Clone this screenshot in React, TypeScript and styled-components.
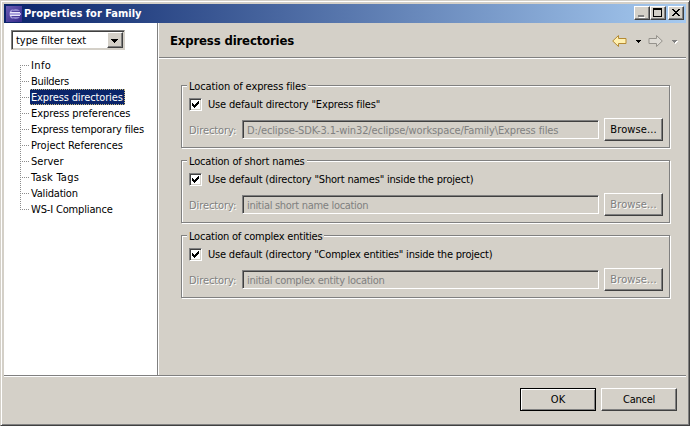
import React from "react";
import styled, { createGlobalStyle } from "styled-components";

const face = "#d4d0c8";
const shadow = "#808080";
const dark = "#404040";

const GlobalStyle = createGlobalStyle`
  * { box-sizing: border-box; }
  body { margin: 0; overflow: hidden; background: ${face}; }
`;

const Dialog = styled.div`
  width: 690px;
  height: 426px;
  display: flex;
  flex-direction: column;
  background: ${face};
  border: 1px solid;
  border-color: ${face} ${dark} ${dark} ${face};
  box-shadow: inset 1px 1px 0 #fff, inset -1px -1px 0 ${shadow};
  padding: 3px;
  font: 11px/16px "DejaVu Sans Condensed", "DejaVu Sans", sans-serif;
  color: #000;
  white-space: nowrap;
`;

const Label = styled.span<{ $tracking?: number }>`
  display: inline-block;
  letter-spacing: ${(p) => p.$tracking ?? 0}px;
`;

const TitleBar = styled.header`
  height: 19px;
  flex: none;
  display: flex;
  align-items: flex-start;
  gap: 3px;
  padding: 2px 2px 0 2px;
  background: linear-gradient(90deg, #0a246a, #a6caf0);
  color: #fff;
`;

const Title = styled.h1`
  margin: 0 0 0 -1px;
  flex: 1;
  font: bold 11px/15px "DejaVu Sans Condensed", sans-serif;
`;

const Captions = styled.div`
  display: flex;
`;

const CaptionButton = styled.button<{ $gap?: boolean }>`
  width: 16px;
  height: 14px;
  padding: 0;
  margin-left: ${(p) => (p.$gap ? 2 : 0)}px;
  display: block;
  background: ${face};
  border: 1px solid;
  border-color: #fff ${dark} ${dark} #fff;
  box-shadow: inset -1px -1px 0 ${shadow};
  svg { display: block; }
`;

const Main = styled.div`
  display: flex;
  height: 352px;
  flex: none;
`;

const Sidebar = styled.nav`
  width: 154px;
  flex: none;
  padding: 7px 0 0 7px;
  background: #fff;
  border-right: 1px solid ${shadow};
`;

const Combo = styled.div`
  width: 114px;
  height: 20px;
  display: flex;
  justify-content: space-between;
  padding: 0 0 0 4px;
  border: 1px solid;
  border-color: ${shadow} ${face} ${face} ${shadow};
  box-shadow: inset 1px 1px 0 ${dark}, inset -1px -1px 0 ${face};
  line-height: 20px;
`;

const DropButton = styled.button`
  width: 16px;
  height: 16px;
  margin: 1px;
  padding: 4px 3px;
  background: ${face};
  border: 1px solid;
  border-color: #fff ${dark} ${dark} #fff;
  box-shadow: inset -1px -1px 0 ${shadow};
  svg { display: block; }
`;

const Tree = styled.ul`
  list-style: none;
  margin: 7px 0 0 9px;
  padding: 0;
`;

const TreeRow = styled.li`
  display: flex;
  height: 16px;
  &:last-child > i { height: 9px; }
  &:first-child > i { height: 8px; margin-top: 8px; }
  &:first-child > i::after { margin-top: 0; }
`;

const Branch = styled.i`
  width: 10px;
  flex: none;
  height: 16px;
  background: repeating-linear-gradient(180deg, #8c8c8c 0 1px, #fff 1px 2px) 0 0 / 1px 100% no-repeat;
  &::after {
    content: "";
    display: block;
    height: 1px;
    margin-top: 8px;
    background: repeating-linear-gradient(90deg, #8c8c8c 0 1px, #fff 1px 2px);
  }
`;

const TreeLabel = styled.span<{ $selected?: boolean }>`
  height: 16px;
  padding: 0 1px;
  line-height: ${(p) => (p.$selected ? 16 : 18)}px;
  color: ${(p) => (p.$selected ? "#fff" : "#000")};
  background: ${(p) => (p.$selected ? "#0a246a" : "none")};
  border: ${(p) => (p.$selected ? "1px dotted #c8b878" : "0 solid")};
  border-width: ${(p) => (p.$selected ? "1px 1px 1px 0" : "0")};
`;

const Page = styled.main`
  flex: 1;
  min-width: 0;
  border-left: 1px solid #fff;
`;

const PageHeader = styled.div`
  height: 35px;
  display: flex;
  align-items: center;
  justify-content: space-between;
  padding: 2px 8px 0 11px;
  border-bottom: 1px solid ${shadow};
  box-shadow: 0 1px 0 #fff;
`;

const Heading = styled.h2`
  margin: 0;
  font: bold 13px/20px "DejaVu Sans Condensed", sans-serif;
`;

const Groups = styled.div`
  padding: 21px 15px 0 22px;
  display: flex;
  flex-direction: column;
  gap: 4px;
`;

const Group = styled.section`
  height: 71px;
  padding-top: 6px;
`;

const GroupFrame = styled.div`
  position: relative;
  width: 489px;
  height: 63px;
  padding: 12px 6px 0 7px;
  border: 1px solid ${shadow};
  box-shadow: 1px 1px 0 #fff, inset 1px 1px 0 #fff;
`;

const Legend = styled.span`
  position: absolute;
  left: 5px;
  top: -7px;
  height: 14px;
  padding: 0 2px;
  background: ${face};
`;

const CheckRow = styled.label`
  display: flex;
  align-items: center;
  gap: 6px;
  height: 13px;
  line-height: 17px;
`;

const Check = styled.span`
  width: 13px;
  height: 13px;
  background: #fff;
  border: 1px solid;
  border-color: ${shadow} #fff #fff ${shadow};
  box-shadow: inset 1px 1px 0 ${dark}, inset -1px -1px 0 ${face};
  svg { display: block; }
`;

const FieldRow = styled.div`
  display: flex;
  align-items: center;
  height: 23px;
  margin-top: 7px;
`;

const FieldName = styled.span`
  width: 53px;
  flex: none;
  padding-top: 2px;
  color: ${shadow};
  text-shadow: 1px 1px 0 #fff;
`;

const Field = styled.div`
  width: 357px;
  height: 19px;
  margin-right: 5px;
  padding-left: 4px;
  line-height: 19px;
  color: ${shadow};
  border: 1px solid;
  border-color: ${shadow} #fff #fff ${shadow};
  box-shadow: inset 1px 1px 0 ${dark};
`;

const Button = styled.button<{ $w: number; $default?: boolean }>`
  width: ${(p) => p.$w}px;
  height: 23px;
  flex: none;
  padding: 0;
  font: inherit;
  line-height: 19px;
  background: ${face};
  color: #000;
  border: 1px solid;
  border-color: ${(p) => (p.$default ? "#000" : `#fff ${dark} ${dark} #fff`)};
  box-shadow: ${(p) =>
    p.$default
      ? `inset 1px 1px 0 #fff, inset -1px -1px 0 ${shadow}`
      : `inset -1px -1px 0 ${shadow}`};
  &:disabled { color: ${shadow}; text-shadow: 1px 1px 0 #fff; }
`;

const Footer = styled.footer`
  flex: 1;
  border-top: 1px solid ${shadow};
  box-shadow: inset 0 1px 0 #fff;
  display: flex;
  justify-content: flex-end;
  gap: 5px;
  padding: 12px 9px 0 0;
`;

const Nav = styled.svg`
  display: block;
`;

const items: { name: string; tracking: number }[] = [
  { name: "Info", tracking: 0.4 },
  { name: "Builders", tracking: -0.3 },
  { name: "Express directories", tracking: -0.13 },
  { name: "Express preferences", tracking: -0.05 },
  { name: "Express temporary files", tracking: -0.18 },
  { name: "Project References", tracking: 0 },
  { name: "Server", tracking: 0 },
  { name: "Task Tags", tracking: 0.22 },
  { name: "Validation", tracking: -0.2 },
  { name: "WS-I Compliance", tracking: -0.15 },
];

const groups = [
  {
    legend: { text: "Location of express files", tracking: -0.09 },
    check: { text: 'Use default directory "Express files"', tracking: -0.16 },
    value: {
      text: "D:/eclipse-SDK-3.1-win32/eclipse/workspace/Family\\Express files",
      tracking: -0.12,
    },
    enabled: true,
  },
  {
    legend: { text: "Location of short names", tracking: -0.17 },
    check: { text: 'Use default (directory "Short names" inside the project)', tracking: -0.19 },
    value: { text: "initial short name location", tracking: -0.3 },
    enabled: false,
  },
  {
    legend: { text: "Location of complex entities", tracking: -0.22 },
    check: { text: 'Use default (directory "Complex entities" inside the project)', tracking: -0.2 },
    value: { text: "initial complex entity location", tracking: -0.29 },
    enabled: false,
  },
];

const EclipseIcon = () => (
  <svg width="16" height="16" viewBox="0 0 16 16">
    <defs>
      <linearGradient id="plate" x1="0" y1="0" x2="1" y2="1">
        <stop offset="0" stopColor="#6a5cb4" />
        <stop offset="1" stopColor="#35298a" />
      </linearGradient>
    </defs>
    <rect width="16" height="16" fill="url(#plate)" />
    <path d="M7 3A5.3 5.3 0 0 0 7 13A8 8 0 0 1 7 3" fill="#a9a0dc" />
    <path d="M5.5 5A5.4 5.4 0 0 1 14 5zM5.5 11A5.4 5.4 0 0 0 14 11z" fill="#8f86cc" />
    <path d="M4 6h10v1H4zM4 9h10v1H4z" fill="#e9e6fa" />
    <path d="M4 7h11v2H4z" fill="#aaa2de" />
  </svg>
);

export default function App() {
  return (
    <>
      <GlobalStyle />
      <Dialog>
        <TitleBar>
          <EclipseIcon />
          <Title><Label>Properties for Family</Label></Title>
          <Captions>
            <CaptionButton aria-label="Minimize">
              <svg width="14" height="12" shapeRendering="crispEdges">
                <path d="M4 10h6v1H4z" fill="#fff" />
                <path d="M3 8h6v2H3z" fill={shadow} />
              </svg>
            </CaptionButton>
            <CaptionButton aria-label="Maximize">
              <svg width="14" height="12" shapeRendering="crispEdges">
                <path d="M2 1h9v9H2zM3 3v6h7V3z" fillRule="evenodd" />
              </svg>
            </CaptionButton>
            <CaptionButton $gap aria-label="Close">
              <svg width="14" height="12" shapeRendering="crispEdges">
                <path d="M3 2h2v1h1v1h2V3h1V2h2v1h-1v1H9v1H8v1h1v1h1v1h1v1H9V8H8V7H6v1H5v1H3V8h1V7h1V6h1V5H5V4H4V3H3z" />
              </svg>
            </CaptionButton>
          </Captions>
        </TitleBar>
        <Main>
          <Sidebar>
            <Combo>
              <Label $tracking={-0.05}>type filter text</Label>
              <DropButton aria-label="Filter history">
                <svg width="8" height="5" shapeRendering="crispEdges">
                  <path d="M0 1h7v1H6v1H5v1H4v1H3V4H2V3H1V2H0z" />
                </svg>
              </DropButton>
            </Combo>
            <Tree>
              {items.map((it, i) => (
                <TreeRow key={it.name}>
                  <Branch />
                  <TreeLabel $selected={i === 2}>
                    <Label $tracking={it.tracking}>{it.name}</Label>
                  </TreeLabel>
                </TreeRow>
              ))}
            </Tree>
          </Sidebar>
          <Page>
            <PageHeader>
              <Heading><Label $tracking={-0.15}>Express directories</Label></Heading>
              <Nav width="66" height="16" viewBox="0 0 66 16">
                <path d="M.7 8L6.5 2.5v3H14v5H6.5v3z" fill="#fff0b0" stroke="#b58a32" />
                <path d="M24 7h5v1h-1v1h-1v1h-1V9h-1V8h-1z" fill="#000" shapeRendering="crispEdges" />
                <path d="M50.3 8L44.5 2.5v3H37v5h7.5v3z" fill="#dedbd5" stroke="#95928c" />
                <path d="M61 8h5v1h-1v1h-1v1h-1v-1h-1V9h-1z" fill="#fff" />
                <path d="M60 7h5v1h-1v1h-1v1h-1V9h-1V8h-1z" fill="#808080" shapeRendering="crispEdges" />
              </Nav>
            </PageHeader>
            <Groups>
              {groups.map((g) => (
                <Group key={g.legend.text}>
                  <GroupFrame>
                    <Legend><Label $tracking={g.legend.tracking}>{g.legend.text}</Label></Legend>
                    <CheckRow>
                      <Check>
                        <svg width="11" height="11" shapeRendering="crispEdges">
                          <path d="M2 4h1v1h1v1h1V5h1V4h1V3h1V2h1v3H8v1H7v1H6v1H5v1H4V8H3V7H2z" />
                        </svg>
                      </Check>
                      <Label $tracking={g.check.tracking}>{g.check.text}</Label>
                    </CheckRow>
                    <FieldRow>
                      <FieldName><Label $tracking={-0.1}>Directory:</Label></FieldName>
                      <Field><Label $tracking={g.value.tracking}>{g.value.text}</Label></Field>
                      <Button $w={59} disabled={!g.enabled}>
                        <Label $tracking={0.1}>Browse...</Label>
                      </Button>
                    </FieldRow>
                  </GroupFrame>
                </Group>
              ))}
            </Groups>
          </Page>
        </Main>
        <Footer>
          <Button $w={76} $default>OK</Button>
          <Button $w={76}><Label $tracking={-0.25}>Cancel</Label></Button>
        </Footer>
      </Dialog>
    </>
  );
}
